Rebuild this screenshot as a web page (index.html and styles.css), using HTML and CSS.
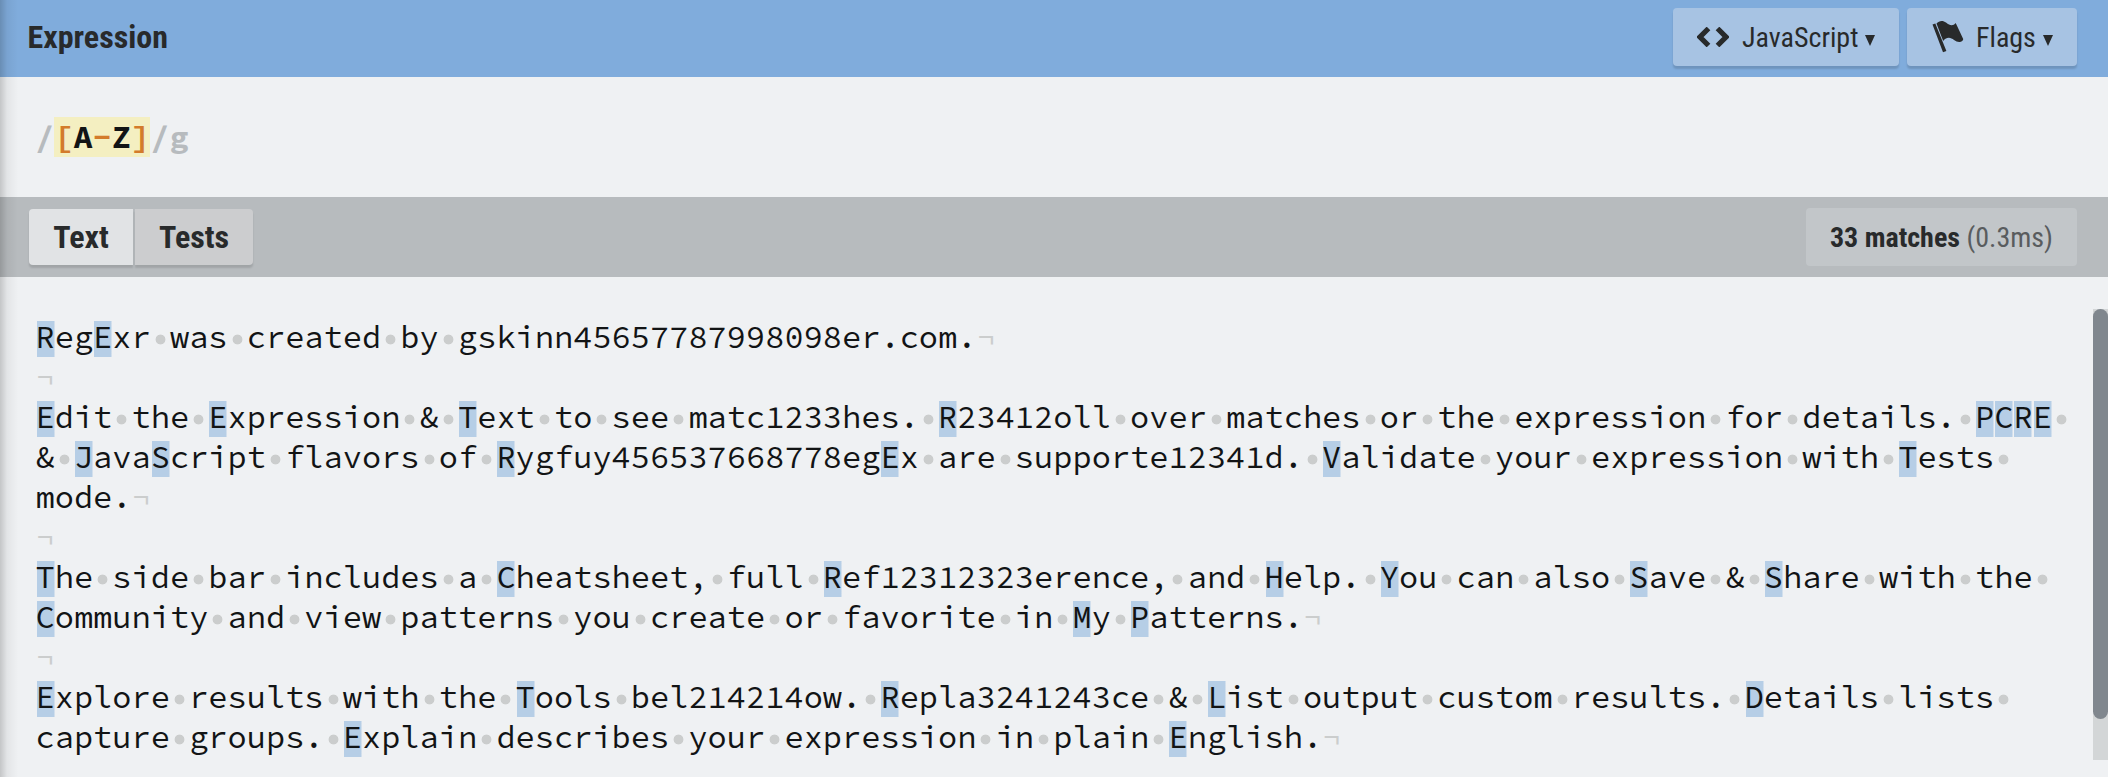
FILE: index.html
```html
<!DOCTYPE html>
<html lang="en">
<head>
<meta charset="utf-8">
<title>Expression</title>
<link rel="stylesheet" href="styles.css">
</head>
<body>
<div class="app">
  <header class="bar bar-expr">
    <h1 class="title">Expression</h1>
    <div class="actions">
      <button class="btn btn-lang">
        <svg class="icon-code" width="32" height="20" viewBox="0 0 32 20"><path d="M11.500 1.500 3 10l8.500 8.500M20.500 1.500l8.500 8.500-8.500 8.500" fill="none" stroke="#282a2b" stroke-width="5.200"/></svg>
        <span>JavaScript</span><i class="caret"></i>
      </button>
      <button class="btn btn-flags">
        <svg class="icon-flag" width="33" height="33" viewBox="0 0 33 33"><path d="M1.500 4.500 4.300 3.400 15.400 31 12 32.300ZM5.500 3.400C8 .5 12 0 15 2.500c4 3.400 7 3.800 9.700.6L32.200 19c.2 1.600-1.600 2.800-3.800 3-3.500.2-7-4.300-10.500-4.300-2.500 0-4.700 1.600-5.700 3.200Z" fill="#282a2b"/></svg>
        <span>Flags</span><i class="caret"></i>
      </button>
    </div>
  </header>
  <section class="expr"><span class="dim">/</span><span class="set"><b>[</b>A<b>-</b>Z<b>]</b></span><span class="dim">/g</span></section>
  <div class="bar bar-text">
    <div class="tabs"><button class="tab tab-on">Text</button><button class="tab">Tests</button></div>
    <div class="result"><b>33 matches</b> <span>(0.3ms)</span></div>
  </div>
  <main class="editor">
    <div class="lines" id="lines"></div>
    <div class="track"><div class="thumb"></div></div>
  </main>
  <div class="edge"></div>
</div>
<script src="script.js"></script>
</body>
</html>
```
FILE: styles.css
```css
* { box-sizing: border-box; }
body { margin: 0; background: #eff1f3; color: #282a2b; font-family: "Roboto Condensed", Roboto, sans-serif; font-stretch: 75%; }
.app { position: relative; width: 2108px; height: 777px; overflow: hidden; display: flex; flex-direction: column; }
.bar { display: flex; justify-content: space-between; padding: 0 31px 0 29px; flex: none; }
.bar-expr { height: 77px; background: #80acdc; padding-left: 27.500px; }
.title { margin: 0; font-size: 32px; line-height: 74px; font-weight: 700; }
.actions { display: flex; gap: 8px; padding-top: 8px; }
.btn { height: 58px; border: 0; border-radius: 4px; background: #a7c3e3; box-shadow: 0 3px 2px rgba(0,0,0,.14); color: #282a2b; font: inherit; font-size: 28px; display: flex; align-items: center; padding: 0 24px; }
.btn span { white-space: nowrap; }
.btn-lang { width: 226px; }
.btn-flags { width: 170px; }
.icon-code { margin-right: 13px; flex: none; }
.icon-flag { margin: 0 13px 2px 0; flex: none; }
.caret { border: 5px solid transparent; border-top: 11px solid #282a2b; border-bottom: 0; margin: 7px 0 0 7px; }
.btn-flags .icon-flag { margin-right: 12px; }
.expr { height: 120px; padding: 40px 0 0 35px; flex: none; display: flex; align-items: flex-start; }
.expr, .lines { font-family: "Source Code Pro", "Noto Sans Mono CJK SC", "Noto Sans Mono", "DejaVu Sans Mono", monospace; font-size: 32px; line-height: 40px; white-space: pre; color: #121415; }
.expr { font-weight: 700; }
.dim { color: #b7bbbe; }
.set { background: #f4efc1; }
.set b { color: #d37b2b; font-weight: 700; }
.bar-text { height: 80px; background: #b7bbbe; }
.tabs { display: flex; gap: 2px; padding-top: 12px; }
.tab { width: 118px; height: 56px; padding: 0; border: 0; border-radius: 0 4px 4px 0; background: #cccdcf; box-shadow: 0 3px 2px rgba(0,0,0,.12); color: #282a2b; font: inherit; font-size: 32px; font-weight: 700; }
.tab-on { width: 104px; background: #e1e3e5; border-radius: 4px 0 0 4px; }
.result { margin-top: 11px; width: 271px; height: 58px; border-radius: 4px; background: #c2c6c9; font-size: 28px; line-height: 59px; text-align: center; white-space: nowrap; }
.result span { color: #595c5e; }
.editor { height: 500px; display: flex; justify-content: space-between; }
.lines { padding: 40px 0 0 35.500px; }
.line { height: 40px; display: flex; }
.cell { width: 19.207px; flex: none; display: block; }
.hit { background: linear-gradient(#b6cee6, #b6cee6) 1px 4px / 17.500px 36px no-repeat; }
.space { background: radial-gradient(circle at 9.500px 22.500px, #cbcdcd 4.500px, transparent 5.300px); }
.eol { color: #cbcdcd; }
.track { margin-top: 32px; width: 15px; height: 451px; background: #d3d6d7; }
.thumb { height: 410px; border-radius: 7.500px; background: #80878e; }
.edge { position: absolute; left: 0; top: 0; width: 18px; height: 777px; background: linear-gradient(90deg, rgba(0,0,0,.18), rgba(0,0,0,.05) 40%, transparent); }
```
FILE: script.js
```js
const lines = [
  "RegExr was created by gskinn45657787998098er.com.\n",
  "\n",
  "Edit the Expression & Text to see matc1233hes. R23412oll over matches or the expression for details. PCRE ",
  "& JavaScript flavors of Rygfuy456537668778egEx are supporte12341d. Validate your expression with Tests ",
  "mode.\n",
  "\n",
  "The side bar includes a Cheatsheet, full Ref12312323erence, and Help. You can also Save & Share with the ",
  "Community and view patterns you create or favorite in My Patterns.\n",
  "\n",
  "Explore results with the Tools bel214214ow. Repla3241243ce & List output custom results. Details lists ",
  "capture groups. Explain describes your expression in plain English.\n"
];
const root = document.getElementById("lines");
for (const text of lines) {
  const row = document.createElement("div");
  row.className = "line";
  for (const ch of text) {
    const cell = document.createElement("span");
    cell.className = "cell";
    if (/[A-Z]/.test(ch)) cell.classList.add("hit");
    if (ch === " ") cell.classList.add("space");
    if (ch === "\n") cell.classList.add("eol");
    cell.textContent = ch === "\n" ? "¬" : ch;
    row.append(cell);
  }
  root.append(row);
}
```
